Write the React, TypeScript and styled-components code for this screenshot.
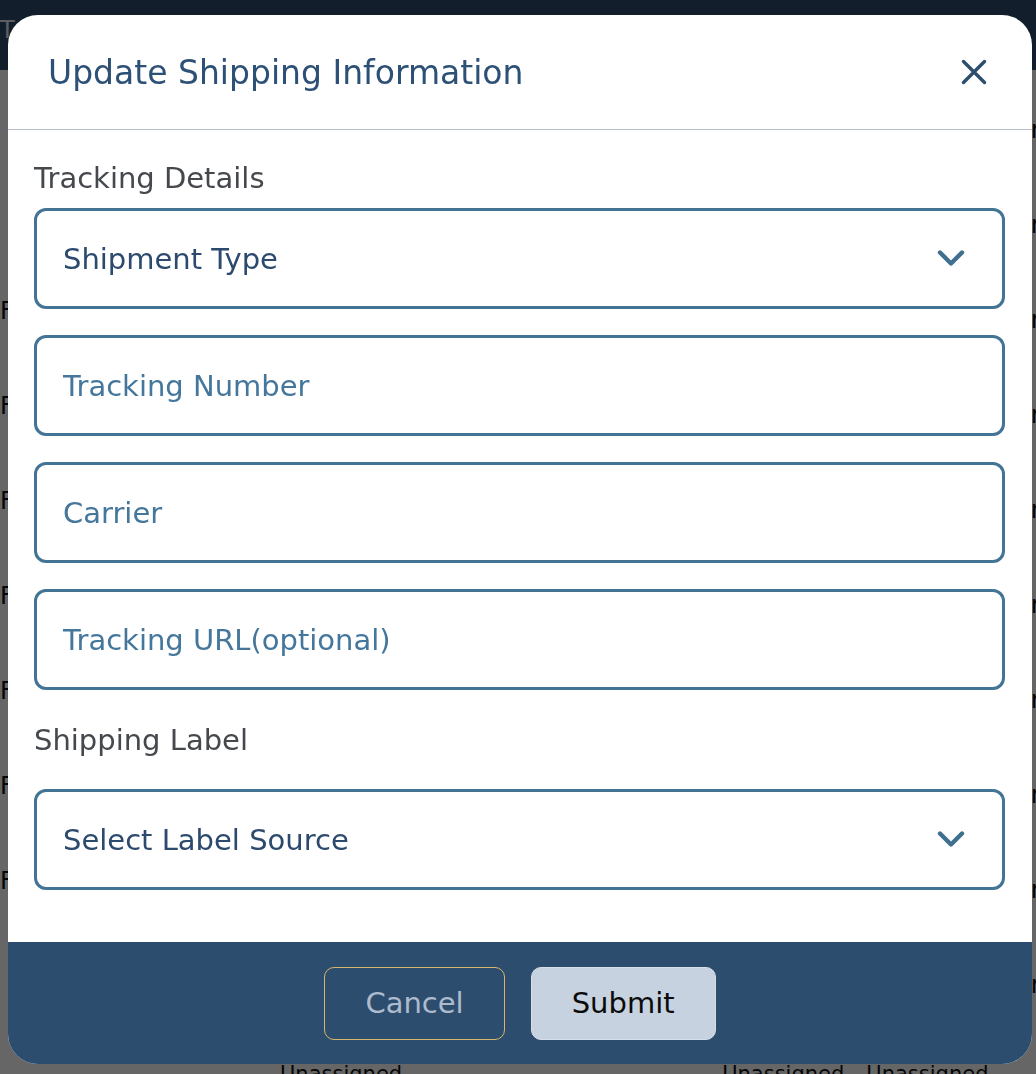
import * as React from 'react';
import styled, { createGlobalStyle } from 'styled-components';

const GlobalStyle = createGlobalStyle`
  html, body {
    margin: 0;
    padding: 0;
    background: #ffffff;
    font-family: "DejaVu Sans", "Noto Sans", sans-serif;
    overflow: hidden;
  }
  * {
    box-sizing: border-box;
  }
`;

/* ---------- page behind the modal ---------- */

const Page = styled.div`
  width: 1036px;
  height: 1074px;
  overflow: hidden;
  background: #ffffff;
`;

const TopBar = styled.div`
  height: 70px;
  margin-bottom: 12px;
  background: #2d4d6f;
  display: flex;
  align-items: center;
  padding-bottom: 10px;
  color: #e6ebf1;
  font-size: 24px;
`;

const TableRow = styled.div`
  height: 95px;
  display: flex;
  align-items: center;
  justify-content: space-between;
  font-size: 24px;
  color: #111111;
  white-space: nowrap;
`;

const LeftCell = styled.span`
  margin-bottom: 18px;
`;

const RightCell = styled.span`
  margin-right: -14px;
`;

const BottomRow = styled.div`
  display: flex;
  gap: 22px;
  margin-top: 30px;
  padding: 0 0 0 280px;
  font-size: 21px;
  line-height: 25px;
  color: #111111;
  white-space: nowrap;
`;

const BottomCell = styled.span<{ $skip?: number }>`
  margin-left: ${p => p.$skip ?? 0}px;
`;

const Overlay = styled.div`
  position: fixed;
  inset: 0;
  background: rgba(0, 0, 0, 0.6);
`;

/* ---------- modal ---------- */

const Modal = styled.div`
  position: fixed;
  top: 15px;
  left: 8px;
  width: 1024px;
  background: #ffffff;
  border-radius: 30px;
  overflow: hidden;
  display: flex;
  flex-direction: column;
`;

const Header = styled.div`
  height: 115px;
  display: flex;
  align-items: center;
  justify-content: space-between;
  padding: 0 45px 0 40px;
  border-bottom: 1px solid #b7c0cd;
`;

const Title = styled.h2`
  margin: 0;
  font-size: 33px;
  font-weight: 400;
  color: #2d5077;
`;

const CloseButton = styled.button`
  border: none;
  background: none;
  padding: 0;
  width: 26px;
  height: 26px;
  display: flex;
  align-items: center;
  justify-content: center;
  cursor: pointer;
`;

const Body = styled.div`
  padding: 30px 27px 52px 26px;
  display: flex;
  flex-direction: column;
`;

const SectionLabel = styled.div<{ $top: number; $bottom: number }>`
  font-size: 29px;
  line-height: 36px;
  color: #45484d;
  margin-top: ${p => p.$top}px;
  margin-bottom: ${p => p.$bottom}px;
`;

const FieldStack = styled.div`
  display: flex;
  flex-direction: column;
  gap: 26px;
`;

const fieldBox = `
  height: 101px;
  width: 100%;
  border: 3px solid #437496;
  border-radius: 12px;
  background: #ffffff;
  font-family: "DejaVu Sans", "Noto Sans", sans-serif;
  font-size: 29px;
`;

const SelectBox = styled.div`
  ${fieldBox}
  display: flex;
  align-items: center;
  justify-content: space-between;
  padding: 0 37px 0 26px;
  color: #2c4a6d;
  cursor: pointer;
`;

const TextInput = styled.input`
  ${fieldBox}
  padding: 0 26px;
  color: #2c4a6d;
  outline: none;

  &::placeholder {
    color: #44779b;
    opacity: 1;
  }
`;

const Footer = styled.div`
  height: 122px;
  background: #2d4d6f;
  display: flex;
  align-items: center;
  justify-content: center;
  gap: 26px;
`;

const FooterButton = styled.button<{ $primary?: boolean }>`
  height: 73px;
  padding: 0 40px;
  border-radius: 10px;
  font-family: "DejaVu Sans", "Noto Sans", sans-serif;
  font-size: 29px;
  cursor: pointer;
  border: 1px solid ${p => (p.$primary ? '#d5dee9' : '#d8b56b')};
  background: ${p => (p.$primary ? '#c6d2e0' : 'transparent')};
  color: ${p => (p.$primary ? '#0b0b0b' : '#aebbcc')};
`;

const Chevron = () => (
  <svg width="28" height="19" viewBox="0 0 28 19" fill="none">
    <path
      d="M3 3.5 L14 14.5 L25 3.5"
      stroke="#3f7090"
      strokeWidth="4.4"
      strokeLinecap="round"
      strokeLinejoin="round"
    />
  </svg>
);

const CloseIcon = () => (
  <svg width="26" height="26" viewBox="0 0 26 26" fill="none">
    <path
      d="M2.5 2.5 L23.5 23.5 M23.5 2.5 L2.5 23.5"
      stroke="#2d4d6f"
      strokeWidth="3.4"
      strokeLinecap="round"
    />
  </svg>
);

const rows = ['', '', 'F', 'F', 'F', 'F', 'F', 'F', 'F', ''];

const App = () => {
  return (
    <>
      <GlobalStyle />
      <Page>
        <TopBar>T</TopBar>
        {rows.map((left, i) => (
          <TableRow key={i}>
            <LeftCell>{left}</LeftCell>
            <RightCell>rr</RightCell>
          </TableRow>
        ))}
        <BottomRow>
          <BottomCell>Unassigned</BottomCell>
          <BottomCell $skip={298}>Unassigned</BottomCell>
          <BottomCell>Unassigned</BottomCell>
        </BottomRow>
      </Page>
      <Overlay />

      <Modal>
        <Header>
          <Title>Update Shipping Information</Title>
          <CloseButton aria-label="Close">
            <CloseIcon />
          </CloseButton>
        </Header>

        <Body>
          <SectionLabel $top={0} $bottom={12}>
            Tracking Details
          </SectionLabel>
          <FieldStack>
            <SelectBox>
              <span>Shipment Type</span>
              <Chevron />
            </SelectBox>
            <TextInput placeholder="Tracking Number" />
            <TextInput placeholder="Carrier" />
            <TextInput placeholder="Tracking URL(optional)" />
          </FieldStack>

          <SectionLabel $top={32} $bottom={31}>
            Shipping Label
          </SectionLabel>
          <SelectBox>
            <span>Select Label Source</span>
            <Chevron />
          </SelectBox>
        </Body>

        <Footer>
          <FooterButton>Cancel</FooterButton>
          <FooterButton $primary>Submit</FooterButton>
        </Footer>
      </Modal>
    </>
  );
};

export default App;
